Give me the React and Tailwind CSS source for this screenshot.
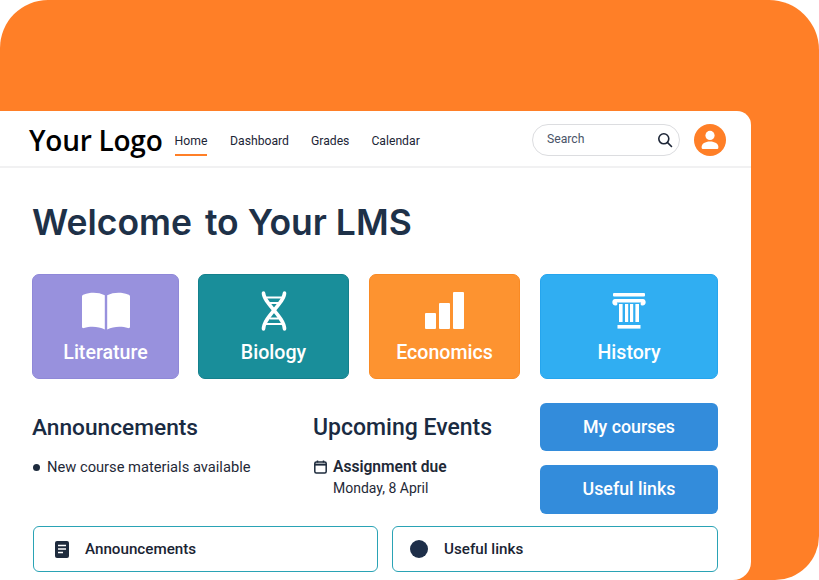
const ROBOTO = "font-['Roboto',sans-serif]"

function BookIcon() {
  return (
    <svg width="48" height="38" viewBox="0 0 48 38" fill="#fff">
      <path d="M2 2.5C8 0 16.5 0 22.8 3.2V37.5C16.5 34 8 34 2 36C0.8 36.4 0 35.8 0 34.8V4.4C0 3.5 0.8 2.9 2 2.5Z" />
      <path d="M46 2.5C40 0 31.5 0 25.2 3.2V37.5C31.5 34 40 34 46 36C47.2 36.4 48 35.8 48 34.8V4.4C48 3.5 47.2 2.9 46 2.5Z" />
    </svg>
  )
}

function DnaIcon() {
  return (
    <svg width="26" height="40" viewBox="0 0 26 40" fill="none" stroke="#fff" strokeLinecap="round">
      <path d="M2.5 2C2.5 12 23.5 26 23.5 38" strokeWidth="3.6" />
      <path d="M23.5 2C23.5 12 2.5 26 2.5 38" strokeWidth="3.6" />
      <path d="M6 6.5H20M9.5 12H17M9.5 27.5H17M5 33H21" strokeWidth="2.2" />
    </svg>
  )
}

function BarsIcon() {
  return (
    <svg width="39" height="37" viewBox="0 0 39 37" fill="#fff">
      <rect x="0" y="21" width="11" height="16" rx="1" />
      <rect x="14" y="11" width="11" height="26" rx="1" />
      <rect x="28" y="0" width="11" height="37" rx="1" />
    </svg>
  )
}

function ColumnIcon() {
  return (
    <svg width="34" height="36" viewBox="0 0 34 36" fill="#fff">
      <rect x="1" y="0" width="32" height="3.4" rx="1" />
      <path d="M3 6H31C34.5 6 34.8 12.5 30.5 12.5C28.5 12.5 28 10.5 29.3 9.6H4.7C6 10.5 5.5 12.5 3.5 12.5C-0.8 12.5 -0.5 6 3 6Z" />
      <rect x="7" y="11" width="3.6" height="18" />
      <rect x="13" y="11" width="3.2" height="18" />
      <rect x="18" y="11" width="3.2" height="18" />
      <rect x="23.4" y="11" width="3.6" height="18" />
      <rect x="5.5" y="32" width="23" height="3.6" />
    </svg>
  )
}

function SubjectCard({ label, bg, width, border, children }) {
  return (
    <div className={`${bg} ${width} ${border} h-[105px] rounded-[7px] border flex flex-col items-center`}>
      <div className="h-[53px] mt-[9px] flex items-center justify-center">{children}</div>
      <span className="mt-[4px] text-[19.6px] leading-[24px] font-medium text-white">{label}</span>
    </div>
  )
}

function LinkBox({ width, children, label, gap }) {
  return (
    <div className={`${width} ${gap} h-[46px] rounded-[6px] border-[1.5px] border-[#2aa3b5] flex items-center`}>
      {children}
      <span className="text-[15.2px] font-medium text-[#1a2433]">{label}</span>
    </div>
  )
}

export default function App() {
  return (
    <div className={`${ROBOTO} w-[819px] h-[580px] overflow-hidden bg-white`}>
      <div className="w-[819px] h-[580px] bg-[#ff7f27] rounded-tl-[48px] rounded-tr-[50px] rounded-br-[44px] pt-[111px]">
        <div className="w-[751px] h-[469px] bg-white rounded-tr-[14px] rounded-br-[18px]">
          <header className="h-[57px] pt-[2px] border-b-2 border-[#f1f1f2] flex items-center">
            <span className="ml-[29px] w-[146px] font-['Open_Sans',sans-serif] text-[28px] leading-none font-semibold text-black -tracking-[0.25px] whitespace-nowrap">
              Your Logo
            </span>
            <nav className="flex text-[12.2px] text-[#1c2536] h-full">
              <div className="w-[32px] mr-[23px] flex flex-col items-center relative">
                <span className="mt-[18px] leading-[20px] whitespace-nowrap">Home</span>
                <span className="absolute top-[41px] left-0 w-[32px] h-[2px] bg-[#ff7f27]" />
              </div>
              <span className="mt-[18px] mr-[22px] leading-[20px]">Dashboard</span>
              <span className="mt-[18px] mr-[22px] leading-[20px]">Grades</span>
              <span className="mt-[18px] leading-[20px]">Calendar</span>
            </nav>
            <div className="ml-auto w-[148px] h-[32px] rounded-full border border-[#dcdde0] flex items-center justify-between pl-[14px] pr-[6px]">
              <span className="text-[12.2px] text-[#4a5468]">Search</span>
              <svg width="16" height="16" viewBox="0 0 16 16" fill="none" stroke="#1c2536" strokeWidth="1.6" strokeLinecap="round">
                <circle cx="6.8" cy="6.8" r="5" />
                <path d="M10.6 10.6L14.5 14.5" />
              </svg>
            </div>
            <div className="ml-[14px] mr-[25px] w-[32px] h-[32px] rounded-full bg-[#ff7f27] flex items-center justify-center">
              <svg width="18" height="20" viewBox="0 0 18 20" fill="#fff">
                <circle cx="9" cy="5.4" r="4.6" />
                <path d="M0.6 17.2C0.6 13.8 4.2 11.6 9 11.6C13.8 11.6 17.4 13.8 17.4 17.2C17.4 18.6 16.8 19 15.6 19H2.4C1.2 19 0.6 18.6 0.6 17.2Z" />
              </svg>
            </div>
          </header>

          <main className="pl-[32px] pr-[33px]">
            <h1 className="mt-[32px] h-[46px] font-['Inter',sans-serif] text-[35.5px] leading-[46px] font-semibold text-[#1e3148] whitespace-nowrap">
              Welcome<span className="ml-[4px]"> to Your LMS</span>
            </h1>

            <div className="mt-[28px] flex">
              <SubjectCard label="Literature" bg="bg-[#9891dd]" border="border-[#8f88d8]" width="w-[147px] mr-[19px]"><BookIcon /></SubjectCard>
              <SubjectCard label="Biology" bg="bg-[#198e9a]" border="border-[#14808c]" width="w-[151px] mr-[20px]"><DnaIcon /></SubjectCard>
              <SubjectCard label="Economics" bg="bg-[#fd9330]" border="border-[#f98a24]" width="w-[151px] mr-[20px]"><BarsIcon /></SubjectCard>
              <SubjectCard label="History" bg="bg-[#30aef2]" border="border-[#25a5ee]" width="w-[178px]"><ColumnIcon /></SubjectCard>
            </div>

            <div className="mt-[24px] flex h-[111px]">
              <section className="w-[281px]">
                <h2 className="mt-[9px] text-[22.7px] leading-[32px] font-medium text-[#1a2b42]">Announcements</h2>
                <div className="mt-[11px] flex items-center text-[14.7px] leading-[24px] text-[#1f2937]">
                  <span className="w-[7px] h-[7px] rounded-full bg-[#1e2b3d] ml-[1px] mr-[7px]" />
                  New course materials available
                </div>
              </section>
              <section className="w-[227px]">
                <h2 className="mt-[9px] text-[23px] leading-[32px] font-medium text-[#1a2b42]">Upcoming Events</h2>
                <div className="mt-[11px] flex items-center text-[15.6px] leading-[24px] font-semibold text-[#1f2937]">
                  <svg className="ml-[1px] mr-[6px]" width="13" height="14" viewBox="0 0 13 14" fill="none" stroke="#1e2b3d" strokeWidth="1.5">
                    <rect x="0.8" y="2" width="11.4" height="11" rx="1.5" />
                    <path d="M0.8 4.6H12.2" strokeWidth="2" />
                    <path d="M3.5 0.4V2.4M9.5 0.4V2.4" />
                  </svg>
                  Assignment due
                </div>
                <div className="ml-[20px] text-[14px] leading-[18px] text-[#1f2937]">Monday, 8 April</div>
              </section>
              <div className="w-[178px] flex flex-col gap-[14px]">
                <button className="h-[48px] rounded-[6px] bg-[#338cdb] text-white text-[17.8px] font-medium">My courses</button>
                <button className="h-[49px] rounded-[6px] bg-[#338cdb] text-white text-[17.8px] font-medium">Useful links</button>
              </div>
            </div>

            <div className="mt-[12px] ml-[1px] flex justify-between">
              <LinkBox width="w-[345px]" gap="pl-[21px] gap-[16px]" label="Announcements">
                <svg width="14" height="17" viewBox="0 0 14 17">
                  <rect x="0" y="0" width="14" height="17" rx="2" fill="#1e2b3d" />
                  <path d="M3 4.5H11M3 8H11M3 11.5H8" stroke="#fff" strokeWidth="1.5" />
                </svg>
              </LinkBox>
              <LinkBox width="w-[326px]" gap="pl-[17px] gap-[16px]" label="Useful links">
                <span className="w-[18px] h-[18px] rounded-full bg-[#1e2f49]" />
              </LinkBox>
            </div>
          </main>
        </div>
      </div>
    </div>
  )
}
